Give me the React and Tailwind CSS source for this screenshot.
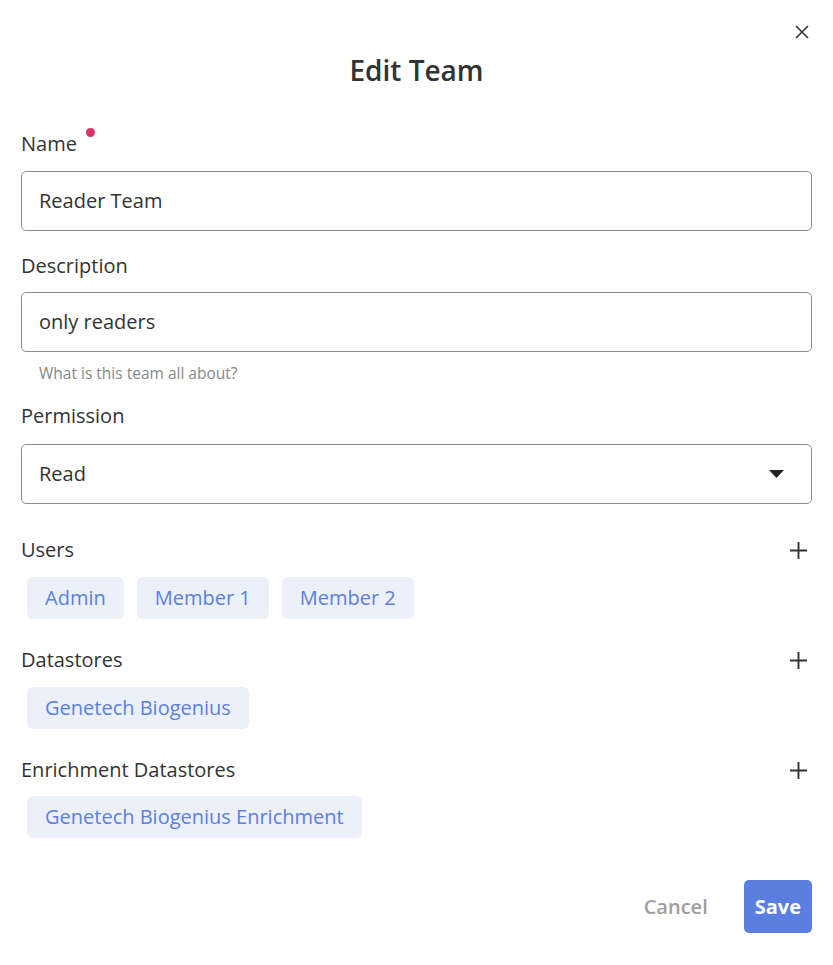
import React from "react";

const font = { fontFamily: '"Open Sans", "Noto Sans", sans-serif' };

function PlusIcon() {
  return (
    <svg className="h-[19px] w-[19px]" viewBox="0 0 20 20" fill="none" stroke="#333" strokeWidth="2">
      <path d="M10 1v18M1 10h18" />
    </svg>
  );
}

function Chip({ children }) {
  return (
    <span className="inline-flex h-[42px] items-center rounded-md bg-[#ecf0fb] px-[18px] text-[20px] text-[#5b80e2]">
      {children}
    </span>
  );
}

function ChipSection({ title, items, gap = "mt-[14px]" }) {
  return (
    <div>
      <div className="flex h-[26px] items-center justify-between">
        <span className="text-[20px] font-medium text-[#333]">{title}</span>
        <span className="mr-[4px]">
          <PlusIcon />
        </span>
      </div>
      <div className={`${gap} flex flex-wrap gap-[13px] pl-[6px]`}>
        {items.map((item) => (
          <Chip key={item}>{item}</Chip>
        ))}
      </div>
    </div>
  );
}

export default function App() {
  return (
    <div className="min-h-screen w-full bg-white px-[21px] text-[#333]" style={font}>
      {/* close */}
      <div className="flex justify-end pt-[22px]">
        <button className="mr-0 flex h-[20px] w-[20px] items-center justify-center">
          <svg className="h-[14px] w-[14px]" viewBox="0 0 14 14" fill="none" stroke="#333" strokeWidth="1.6">
            <path d="M1 1l12 12M13 1L1 13" />
          </svg>
        </button>
      </div>

      <h1 className="mt-[10px] text-center text-[28px] font-semibold leading-[36px] text-[#333]">Edit Team</h1>

      {/* Name */}
      <div className="mt-[43px] flex h-[26px] items-center">
        <span className="text-[20px] font-medium">Name</span>
        <span className="mb-[23px] ml-[9px] h-[9px] w-[9px] rounded-full bg-[#d6336c]"></span>
      </div>
      <div className="mt-[14px] flex h-[60px] items-center rounded-[5px] border border-[#8e8e8e] px-[17px] text-[20px]">
        Reader Team
      </div>

      {/* Description */}
      <div className="mt-[22px] flex h-[26px] items-center">
        <span className="text-[20px] font-medium">Description</span>
      </div>
      <div className="mt-[13px] flex h-[60px] items-center rounded-[5px] border border-[#8e8e8e] px-[17px] text-[20px]">
        only readers
      </div>
      <div className="mt-[11px] h-[20px] pl-[18px] text-[15.5px] leading-[20px] text-[#888]">
        What is this team all about?
      </div>

      {/* Permission */}
      <div className="mt-[20px] flex h-[26px] items-center">
        <span className="text-[20px] font-medium">Permission</span>
      </div>
      <div className="mt-[15px] flex h-[60px] items-center justify-between rounded-[5px] border border-[#8e8e8e] pl-[17px] pr-[27px] text-[20px]">
        <span>Read</span>
        <svg className="h-[8px] w-[15px]" viewBox="0 0 15 8">
          <path d="M0 0h15L7.5 8z" fill="#222" />
        </svg>
      </div>

      <div className="mt-[33px]">
        <ChipSection title="Users" items={["Admin", "Member 1", "Member 2"]} />
      </div>
      <div className="mt-[28px]">
        <ChipSection title="Datastores" items={["Genetech Biogenius"]} />
      </div>
      <div className="mt-[28px]">
        <ChipSection title="Enrichment Datastores" items={["Genetech Biogenius Enrichment"]} gap="mt-[13px]" />
      </div>

      {/* actions */}
      <div className="mt-[42px] flex items-center justify-end gap-[36px]">
        <button className="text-[20px] font-semibold text-[#9e9e9e]">Cancel</button>
        <button className="flex h-[53px] items-center rounded-[5px] bg-[#5a7fe0] px-[11px] text-[20px] font-bold text-white">
          Save
        </button>
      </div>
    </div>
  );
}
